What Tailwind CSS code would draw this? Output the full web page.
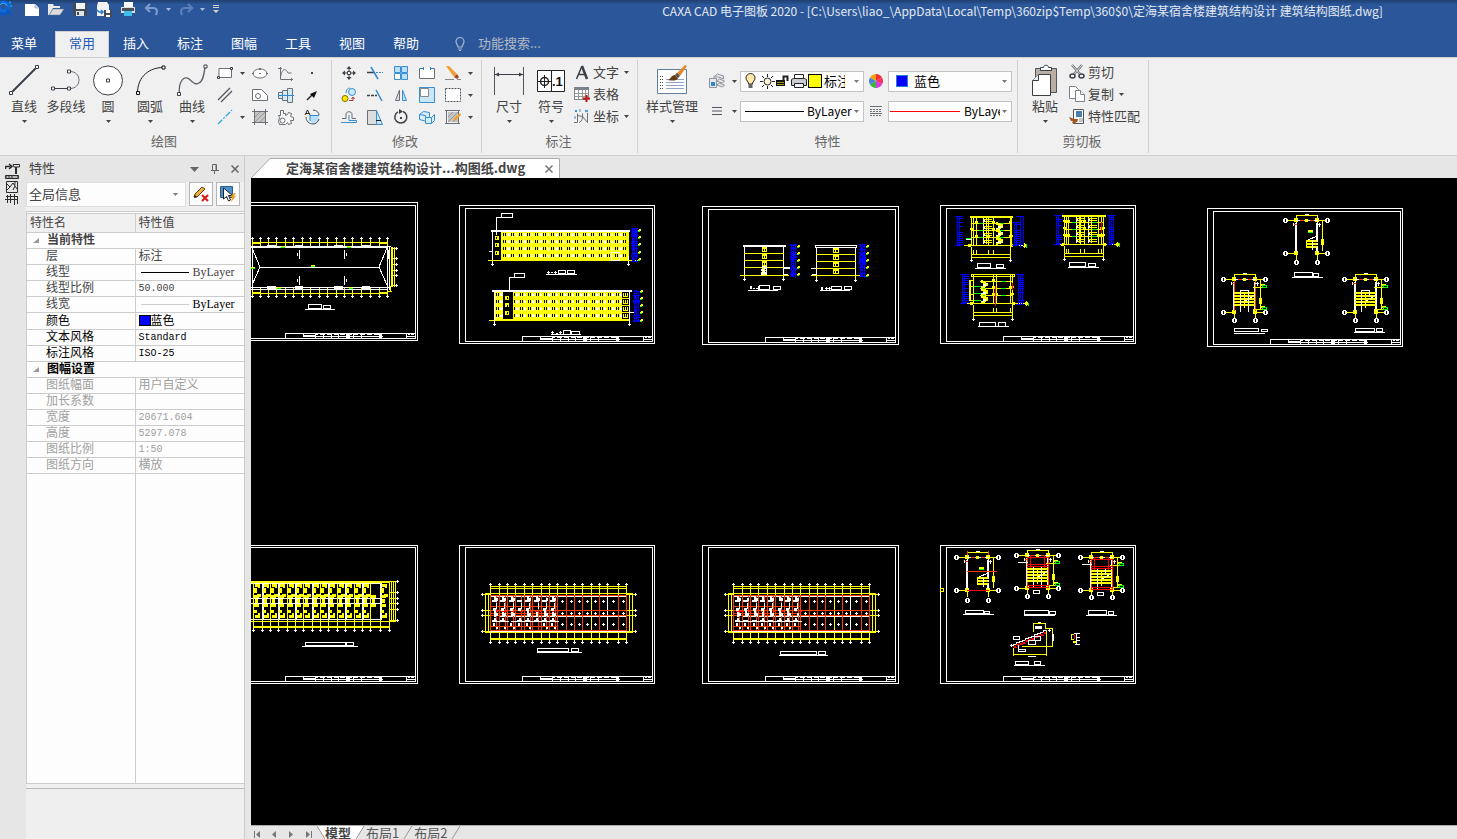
<!DOCTYPE html>
<html lang="zh-CN">
<head>
    <meta charset="UTF-8">
    <meta name="viewport" content="width=device-width, initial-scale=1.0">
    <title>CAXA CAD 电子图板 2020</title>
    <script src="https://cdn.jsdelivr.net/npm/@tailwindcss/browser@4"></script>
</head>
<body class="h-screen flex flex-col overflow-hidden bg-[#e6e6e6] font-['Noto_Sans_CJK_SC',sans-serif] text-[13px] leading-4 text-[#444444]">

    <!-- Shared icons -->
    <svg class="hidden">
        <symbol id="caret" viewBox="0 0 5 3"><path d="M0 0h5L2.5 3z" fill="currentColor"/></symbol>
    </svg>

    <header class="bg-[#2b579a] text-white">
        <!-- Quick access + title -->
        <div class="flex h-[31px] items-start bg-linear-to-b from-[#1f3f70] to-[#2b579a] to-15%">
            <svg class="mr-1 h-[18px] w-4" viewBox="0 0 16 18" fill="none"><path d="M0 3c3-2 7-1 8 2s-1 6-4 6-5-2-4-4" stroke="#0a6be0" stroke-width="3"/><path d="M0 5c2-3 6-2 7 1" stroke="#4ab4ff"/><path d="M0 14c3 1 7 0 8-3l3 4" stroke="#0b58c8" stroke-width="2.500"/><path d="M9 2l2 1M10 6h2" stroke="#1d8df2" stroke-width="2"/></svg>
            <button class="flex h-[18px] w-6 items-center justify-center" aria-label="新建"><svg class="h-4 w-4" viewBox="0 0 16 16"><path d="M1 3h10l4 4v8H1z" fill="#fff"/><path d="M11 3v4h4" fill="#cfd6e2" stroke="#8b98b0" stroke-width=".6"/></svg></button>
            <button class="flex h-[18px] w-6 items-center justify-center" aria-label="打开"><svg class="h-4 w-4" viewBox="0 0 16 16"><path d="M0 3h5l1 2h6v2H5l-4 7H0z" fill="#e9e9e9"/><path d="M5 8h11l-4 6H1z" fill="#dcdcdc" stroke="#62718e" stroke-width=".5"/></svg></button>
            <button class="flex h-[18px] w-6 items-center justify-center" aria-label="保存"><svg class="h-4 w-4" viewBox="0 0 16 16"><path d="M1 2h14v13H3l-2-2z" fill="#444b57"/><path d="M4 2h9v6H4z" fill="#f5f5f5"/><path d="M4 10h8v5H4z" fill="#dfe3ea"/><path d="M5 11h2v3H5z" fill="#444b57"/></svg></button>
            <button class="flex h-[18px] w-6 items-center justify-center" aria-label="另存为"><svg class="h-4 w-4" viewBox="0 0 16 16"><path d="M2 1h9l2 3v11H1V5z" fill="#f2f2f2"/><path d="M1 9l2 2h4M5 9l2 2-2 2" stroke="#2a7fd0" fill="none" stroke-width="1.5"/><path d="M8 9h8v7H8z" fill="#444b57"/><path d="M10 9h4v3h-4zM10 14h4v2h-4z" fill="#fff"/></svg></button>
            <button class="flex h-[18px] w-6 items-center justify-center" aria-label="打印"><svg class="h-4 w-4" viewBox="0 0 16 16"><path d="M4 1h9v5H4z" fill="#fff"/><path d="M1 6h14v6H1z" fill="#dedede"/><path d="M2 7h12v3H2z" fill="#4b4f57"/><path d="M4 10h8v5H4z" fill="#3fc0ea"/></svg></button>
            <button class="flex h-[18px] w-6 items-center justify-center text-[#7d9aca]" aria-label="撤销"><svg class="h-4 w-4" viewBox="0 0 16 16" fill="none" stroke="currentColor" stroke-width="2.2"><path d="M6 3L2 7l4 4M3 7h6c4 0 5 3 3 7"/></svg></button>
            <button class="flex h-[18px] w-2 items-center justify-center text-[#a9bcdc]" aria-label="撤销列表"><svg class="h-[3px] w-[5px]"><use href="#caret"/></svg></button>
            <button class="ml-[2px] flex h-[18px] w-6 items-center justify-center text-[#5b7fbb]" aria-label="重做"><svg class="h-4 w-4" viewBox="0 0 16 16" fill="none" stroke="currentColor" stroke-width="2.2"><path d="M10 3l4 4-4 4M13 7H7c-4 0-5 3-3 7"/></svg></button>
            <button class="flex h-[18px] w-2 items-center justify-center text-[#a9bcdc]" aria-label="重做列表"><svg class="h-[3px] w-[5px]"><use href="#caret"/></svg></button>
            <button class="ml-1 flex h-[18px] w-3 items-center justify-center" aria-label="自定义快速访问"><svg class="h-2 w-[6px]" viewBox="0 0 6 8" fill="#d5cfc5"><path d="M0 0h6v1H0zM0 2h6v1H0zM0 5h6L3 8z"/></svg></button>
            <h1 class="flex-1 pt-[3px] pl-[366px] text-center text-[12px] whitespace-nowrap text-[#e3e8f0]">CAXA CAD 电子图板 2020 - [C:\Users\liao_\AppData\Local\Temp\360zip$Temp\360$0\定海某宿舍楼建筑结构设计 建筑结构图纸.dwg]</h1>
        </div>
        <!-- Ribbon tabs -->
        <nav class="flex h-[26px] items-stretch">
            <button class="mr-[7px] w-12 pb-[3px]">菜单</button>
            <button class="w-[54px] border border-b-0 border-[#d0d0d0] bg-[#f0f0f0] pb-[3px] text-[#1e5bb5]">常用</button>
            <button class="w-[54px] pb-[3px]">插入</button>
            <button class="w-[54px] pb-[3px]">标注</button>
            <button class="w-[54px] pb-[3px]">图幅</button>
            <button class="w-[54px] pb-[3px]">工具</button>
            <button class="w-[54px] pb-[3px]">视图</button>
            <button class="w-[54px] pb-[3px]">帮助</button>
            <label class="ml-[21px] flex items-center gap-3 pb-[3px] text-[#b3c3dd]">
                <svg class="h-4 w-3" viewBox="0 0 12 16" fill="none" stroke="#a8b8d4" stroke-width="1.2"><path d="M4 12C4 10 2 9 2 6.500a4 4 0 0 1 8 0C10 9 8 10 8 12zM4 14h4M5 15.500h2"/></svg>
                <input type="text" placeholder="功能搜索..." class="w-32 outline-none placeholder:text-[#b3b9c4]">
            </label>
        </nav>
    </header>

    <!-- Ribbon -->
    <section class="flex h-[99px] border-t border-b border-[#cfcfcf] bg-[#f0f0f0] py-[2px]">
        <div class="flex flex-col border-r border-[#d2d2d2] pr-[6px] pl-[3px]">
            <div class="flex h-[71px] pt-[2px]">
                <button class="flex w-[42px] flex-col items-center whitespace-nowrap">
                    <svg class="h-[34px] w-8" viewBox="0 0 32 34"><path d="M2.500 31.500l27-27" stroke="#3b4048" stroke-width="2"/><path d="M1.500 29.500h3v3h-3zM27.500 3.500h3v3h-3z" fill="#fff" stroke="#3b4048"/></svg>
                    <span class="mt-[2px]">直线</span><svg class="mt-[6px] h-[3px] w-[5px]"><use href="#caret"/></svg>
                </button>
                <button class="flex w-[42px] flex-col items-center whitespace-nowrap">
                    <svg class="h-[34px] w-8" viewBox="0 0 32 34"><path d="M3 26.500h17c12 0 12-17 0-17" fill="none" stroke="#6b7078"/><path d="M3 26.500h16" stroke="#3b4048"/><path d="M1.500 25h3v3h-3zM17.500 25h3v3h-3zM17.500 8h3v3h-3z" fill="#fff" stroke="#3b4048"/></svg>
                    <span class="mt-[2px]">多段线</span>
                </button>
                <button class="flex w-[42px] flex-col items-center whitespace-nowrap">
                    <svg class="h-[34px] w-8" viewBox="0 0 32 34"><circle cx="16" cy="18.500" r="14.500" fill="#fff" stroke="#3b4048"/><path d="M14.500 17h3v3h-3z" fill="#fff" stroke="#3b4048"/></svg>
                    <span class="mt-[2px]">圆</span><svg class="mt-[6px] h-[3px] w-[5px]"><use href="#caret"/></svg>
                </button>
                <button class="flex w-[42px] flex-col items-center whitespace-nowrap">
                    <svg class="h-[34px] w-8" viewBox="0 0 32 34"><path d="M3.500 31C3.500 14 16 5.500 29 5.500" fill="none" stroke="#222"/><path d="M2.500 29.500h3v3h-3zM28 4h3v3h-3z" fill="#fff" stroke="#111"/></svg>
                    <span class="mt-[2px]">圆弧</span><svg class="mt-[6px] h-[3px] w-[5px]"><use href="#caret"/></svg>
                </button>
                <button class="flex w-[42px] flex-col items-center whitespace-nowrap">
                    <svg class="h-[34px] w-8" viewBox="0 0 32 34"><path d="M3.500 32C2 20 8 13 13 17s6 6 10 4 5-8 6-16" fill="none" stroke="#5a5f68" stroke-width="1.300"/><path d="M1.500 30.500h3v3h-3zM28 3h3v3h-3z" fill="#fff" stroke="#3b4048"/></svg>
                    <span class="mt-[2px]">曲线</span><svg class="mt-[6px] h-[3px] w-[5px]"><use href="#caret"/></svg>
                </button>
                <div class="grid grid-cols-[24px_10px_26px_26px_26px] grid-rows-[22px_22px_22px] place-items-center">
                    <button aria-label="矩形"><svg class="h-4 w-4" viewBox="0 0 16 16"><path d="M2 3.500h12.500v9H2z" fill="#fff" stroke="#6b7078"/><path d="M13.500 2.500h2v2h-2zM.5 11.500h2v2h-2z" fill="#fff" stroke="#3b4048"/></svg></button>
                    <button aria-label="矩形选项"><svg class="h-[3px] w-[5px]"><use href="#caret"/></svg></button>
                    <button aria-label="椭圆"><svg class="h-4 w-4" viewBox="0 0 16 16"><ellipse cx="8" cy="8.500" rx="7" ry="4.500" fill="#fff" stroke="#6b7078"/><path d="M7 8h2v1H7zM7 3h2v2H7zM0 8h2v1H0zM14 8h2v1h-2z" fill="#6b7078"/></svg></button>
                    <button aria-label="公式曲线"><svg class="h-4 w-4" viewBox="0 0 16 16" fill="none" stroke="#6b7078"><path d="M2.500 2v12.500H15M0 3.500h4M13.500 13v3M2.500 12C4 3 8 3 10 8h3.500"/></svg></button>
                    <button aria-label="点"><svg class="h-4 w-4" viewBox="0 0 16 16"><path d="M7 7h2v2H7z" fill="#444"/></svg></button>

                    <button aria-label="平行线"><svg class="h-4 w-4" viewBox="0 0 16 16" stroke="#50555e" stroke-width="1.300"><path d="M1 13L13 1M4 15L15 4"/></svg></button>
                    <span></span>
                    <button aria-label="孔轴"><svg class="h-4 w-4" viewBox="0 0 16 16" fill="#fff" stroke="#6b7078"><path d="M.500 2.500h9l6 6v5H.500z"/><circle cx="6" cy="9" r="2.500"/></svg></button>
                    <button aria-label="轴"><svg class="h-4 w-4" viewBox="0 0 16 16" fill="#d3ebf7" stroke="#6b7078"><path d="M.500 5.500h4v6h-4zM4.500 3.500h5v10h-5zM9.500 1.500h5v14h-5z"/><path d="M0 8.500h16" stroke="#2f87cf"/></svg></button>
                    <button aria-label="箭头"><svg class="h-4 w-4" viewBox="0 0 16 16"><path d="M3 13l5-5" stroke="#222" stroke-width="1.500"/><path d="M13 4l-3 7-4-4z" fill="#111"/></svg></button>

                    <button aria-label="中心线"><svg class="h-4 w-4" viewBox="0 0 16 16" stroke="#2ba3e0" stroke-width="1.200"><path d="M1 15L15 1" stroke-dasharray="6 1.500 2 1.500"/></svg></button>
                    <button aria-label="中心线选项"><svg class="h-[3px] w-[5px]"><use href="#caret"/></svg></button>
                    <button aria-label="剖面线"><svg class="h-4 w-4" viewBox="0 0 16 16"><path d="M3 3h10v10H3z" fill="#c4c4c4"/><path d="M3 8l5-5M3 13L13 3M8 13l5-5" stroke="#999"/><path d="M2.500 0v16M13.500 0v16M0 2.500h16M0 13.500h16" stroke="#6b7078"/></svg></button>
                    <button aria-label="齿轮"><svg class="h-4 w-4" viewBox="0 0 16 16" fill="#f7f7f7" stroke="#6b7078"><path d="M2.500 1.500h3v3h2v2l2-1 1-2 3 1-1 3 3 1v3h-3l1 3-3 1-1-2-2 2h-6l-1-3 1-4-1-2h2z"/><circle cx="4.500" cy="11.500" r="2.500"/></svg></button>
                    <button aria-label="局部放大"><svg class="h-4 w-4" viewBox="0 0 16 16" fill="none"><path d="M6 6h9v4c-1 3-3 5-5 5s-4-2-4-4z" fill="#b9e0f5"/><path d="M9 1c4 0 6 3 6 5M2 8c0 4 3 7 7 7 3 0 5-2 6-5" stroke="#50555e"/><path d="M6 6.500h9M6 6v6" stroke="#2f87cf"/><path d="M1 6l2.500-5L6 6M2 4.500h3" stroke="#222"/></svg></button>
                </div>
            </div>
            <p class="pt-[2px] text-center text-[#666666]">绘图</p>
        </div>

        <div class="flex flex-col border-r border-[#d2d2d2] pr-[7px] pl-1">
            <div class="flex h-[71px] pt-[2px]">
                <div class="grid grid-cols-[26px_26px_26px_26px_26px_8px] grid-rows-[22px_22px_22px] place-items-center">
                    <button aria-label="平移"><svg class="h-4 w-4" viewBox="0 0 16 16"><path d="M8 1l2.500 3h-5zM8 15l2.500-3h-5zM1 8l3-2.500v5zM15 8l-3-2.500v5z" fill="#3b4048"/><path d="M8 3v3M8 10v3M3 8h3M10 8h3" stroke="#3b4048"/><path d="M6.500 6.500h3v3h-3z" fill="#fff" stroke="#3b4048"/></svg></button>
                    <button aria-label="裁剪"><svg class="h-4 w-4" viewBox="0 0 16 16"><path d="M0 7.500h7" stroke="#3b4048" stroke-width="1.500"/><path d="M9 7.500h7" stroke="#2f87cf" stroke-dasharray="2 1"/><path d="M4 2l7 12" stroke="#2f87cf" stroke-width="1.500"/></svg></button>
                    <button aria-label="阵列"><svg class="h-4 w-4" viewBox="0 0 16 16" fill="#b9e0f5" stroke="#3a8fd0"><path d="M1.500 1.500h6v6h-6zM8.500 1.500h6v6h-6zM8.500 8.500h6v6h-6z"/><path d="M1.500 8.500h6v6h-6z" fill="#fff"/></svg></button>
                    <button aria-label="打断"><svg class="h-4 w-4" viewBox="0 0 16 16"><path d="M4 3.500H.500v10h15v-10H12" fill="#fff" stroke="#6b7078"/><path d="M2 3.500h3M11 3.500h3M4.500 2v3M11.500 2v3" stroke="#2f87cf"/></svg></button>
                    <button aria-label="删除"><svg class="h-4 w-4" viewBox="0 0 16 16"><path d="M1 1l3 0 8 8-3 3z" fill="#f0a030"/><path d="M9 12l3-3 2 3-2 2z" fill="#a04a28"/><path d="M0 14.500h9M12 14.500h4" stroke="#888"/></svg></button>
                    <button aria-label="删除选项"><svg class="h-[3px] w-[5px]"><use href="#caret"/></svg></button>

                    <button aria-label="复制图形"><svg class="h-4 w-4" viewBox="0 0 16 16"><circle cx="4" cy="11.500" r="3" fill="#ffe800" stroke="#7a7200"/><circle cx="11" cy="5" r="3.500" fill="#c9e9f9" stroke="#3a8fd0"/><path d="M5 6c0-3 2-5 4-5" stroke="#3a8fd0" fill="none"/><path d="M8 13.500h4V11M10.500 12L12 10l1.500 2" stroke="#a33" fill="none"/></svg></button>
                    <button aria-label="延伸"><svg class="h-4 w-4" viewBox="0 0 16 16"><path d="M0 8.500h10" stroke="#3b4048" stroke-width="1.500" stroke-dasharray="3 1"/><path d="M9 3l6 11" stroke="#2f87cf" stroke-width="1.500"/></svg></button>
                    <button aria-label="镜像"><svg class="h-4 w-4" viewBox="0 0 16 16"><path d="M6.500 3v10.500h-4z" fill="#ddd" stroke="#6b7078"/><path d="M9.500 3v10.500h4z" fill="#b9e0f5" stroke="#3a8fd0"/></svg></button>
                    <button aria-label="缩放"><svg class="h-4 w-4" viewBox="0 0 16 16"><path d="M.500.500h15v15H.500z" fill="#c9e7f7" stroke="#3a8fd0"/><path d="M1.500 1.500h8v8h-8z" fill="#fff" stroke="#888"/></svg></button>
                    <button aria-label="选择框"><svg class="h-4 w-4" viewBox="0 0 16 16"><path d="M.500 1.500h15v13H.500z" fill="#fff" stroke="#50555e" stroke-dasharray="2 1"/></svg></button>
                    <button aria-label="选择框选项"><svg class="h-[3px] w-[5px]"><use href="#caret"/></svg></button>

                    <button aria-label="等距线"><svg class="h-4 w-4" viewBox="0 0 16 16" fill="none"><path d="M1 9.500h4V5c0-3 6-3 6 0v4.500h4" stroke="#6b7078"/><path d="M0 13.500h15.500v-2H8V6" stroke="#3a8fd0"/></svg></button>
                    <button aria-label="拉伸"><svg class="h-4 w-4" viewBox="0 0 16 16"><path d="M.500 1.500h9v14h-9z" fill="#ddd" stroke="#6b7078"/><path d="M9.500 1.500l6 14h-6z" fill="#c9e7f7" stroke="#3a8fd0"/><path d="M9 11.500h5" stroke="#222"/></svg></button>
                    <button aria-label="旋转"><svg class="h-4 w-4" viewBox="0 0 16 16"><path d="M10 2.500A6 6 0 1 1 5 2.800" fill="none" stroke="#3b4048" stroke-width="1.500"/><path d="M6 0l4 2.500L6 5z" fill="#3b4048"/><path d="M7 8h2v2H7z" fill="#3b4048"/></svg></button>
                    <button aria-label="块"><svg class="h-4 w-4" viewBox="0 0 16 16" fill="#d6eefa" stroke="#3a8fd0"><path d="M.500 5.500l4-3 6 1v7l-3 2-7-2z"/><path d="M6.500 8.500h6l3-3v6l-3 3h-6zM12.500 8.500v6M.500 5.500l6 1v2"/></svg></button>
                    <button aria-label="块编辑"><svg class="h-4 w-4" viewBox="0 0 16 16"><path d="M3 3h10v10H3z" fill="#c4c4c4"/><path d="M3 8l5-5M3 13L13 3M8 13l5-5" stroke="#999"/><path d="M1.500 1v14M13.500 1v14M0 1.500h15M0 14.500h15" stroke="#6b7078"/><path d="M8 12l1-3 6-5 1 2-5 5z" fill="#f0a030"/></svg></button>
                    <button aria-label="块编辑选项"><svg class="h-[3px] w-[5px]"><use href="#caret"/></svg></button>
                </div>
            </div>
            <p class="pt-[2px] text-center text-[#666666]">修改</p>
        </div>

        <div class="flex flex-col border-r border-[#d2d2d2] pr-2 pl-[6px]">
            <div class="flex h-[71px] pt-[2px]">
                <button class="flex w-[42px] flex-col items-center whitespace-nowrap">
                    <svg class="h-[34px] w-8" viewBox="0 0 32 34"><path d="M1.500 5v28M30.500 5v28" stroke="#50555e"/><path d="M2 12.500h28" stroke="#3b4048"/><path d="M2 12.500l4-2v4zM30 12.500l-4-2v4z" fill="#3b4048"/></svg>
                    <span class="mt-[2px]">尺寸</span><svg class="mt-[6px] h-[3px] w-[5px]"><use href="#caret"/></svg>
                </button>
                <button class="flex w-[42px] flex-col items-center whitespace-nowrap">
                    <svg class="h-[34px] w-8" viewBox="0 0 32 34"><path d="M2.500 8.500h27v21h-27z" fill="#fff" stroke="#222"/><path d="M16.500 8v22M3 19.500h13M9.500 13v13" stroke="#222"/><circle cx="9.500" cy="19.500" r="4" fill="none" stroke="#222" stroke-width="1.500"/><text x="17" y="24" font-family="Liberation Sans" font-weight="bold" font-size="13" fill="#111">.1</text></svg>
                    <span class="mt-[2px]">符号</span><svg class="mt-[6px] h-[3px] w-[5px]"><use href="#caret"/></svg>
                </button>
                <div class="ml-[2px] flex flex-col whitespace-nowrap">
                    <button class="flex h-[22px] items-center gap-[3px] pb-[2px]"><svg class="h-4 w-4" viewBox="0 0 16 16" fill="none" stroke="#3b4048"><path d="M2.500 15L8 2M4 10.500h8" stroke-width="1.500"/><path d="M8 2l5 13" stroke-width="2.500"/></svg>文字<svg class="ml-[2px] h-[3px] w-[5px]"><use href="#caret"/></svg></button>
                    <button class="flex h-[22px] items-center gap-[3px] pb-[2px]"><svg class="h-4 w-4" viewBox="0 0 16 16"><path d="M.500 1.500h14v12H.500z" fill="#fff" stroke="#888"/><path d="M0 1h15v3H0z" fill="#7b828c"/><path d="M1 7.500h13M1 10.500h13M4.500 4v9M8.500 4v9M11.500 4v9" stroke="#999"/><path d="M12.500 9v7M9 12.500h7" stroke="#c01818" stroke-width="2"/></svg>表格</button>
                    <button class="flex h-[22px] items-center gap-[3px] pb-[2px]"><svg class="h-4 w-4" viewBox="0 0 16 16" fill="none"><path d="M3.500 5.500v9M3.500 7.500l5 1 5 6M5 14.500c3-1 4-4 3.500-9M13.500 5v9.500M0 14.500h3" stroke="#6b7078"/><path d="M1 2l2 2M3 2l-2 2M6 1v3M11 2l3 2M14 2l-3 2M1 8v3" stroke="#3a8fd0"/></svg>坐标<svg class="ml-[2px] h-[3px] w-[5px]"><use href="#caret"/></svg></button>
                </div>
            </div>
            <p class="pt-[2px] text-center text-[#666666]">标注</p>
        </div>

        <div class="flex flex-col border-r border-[#d2d2d2] pr-[5px] pl-[5px]">
            <div class="flex h-[71px] pt-[2px]">
                <button class="flex w-[58px] flex-col items-center whitespace-nowrap">
                    <svg class="h-[34px] w-8" viewBox="0 0 32 34"><path d="M1.500 7.500h29v24h-29z" fill="#fff" stroke="#5f7f9a"/><path d="M4 14.500h4M4 17.500h4M4 20.500h4M4 23.500h4M4 26.500h4" stroke="#444" stroke-dasharray="1 1"/><path d="M10 17.500h18M10 20.500h18M10 23.500h18M10 26.500h18" stroke="#8fa3c4"/><path d="M12 18c3-1 3-5 7-5l3 3c-1 3-6 3-10 2z" fill="#6b3d14"/><path d="M20 12l9-9 2 1-7 10z" fill="#e08a2a"/><path d="M19 13l2-2 3 3-2 2z" fill="#555"/></svg>
                    <span class="mt-[2px]">样式管理</span><svg class="mt-[6px] h-[3px] w-[5px]"><use href="#caret"/></svg>
                </button>
                <div class="ml-2 grid grid-cols-[16px_15px_124px_24px_124px] grid-rows-[20px_20px] content-start items-center gap-y-[10px] pt-[9px] text-black">
                    <button aria-label="图层"><svg class="h-4 w-4" viewBox="0 0 16 16" fill="#e8e8e8" stroke="#8d939c"><path d="M4.500 4l4-3 6 2v3l-5-2zM7.500 8l3-2 5 2-2 2zM7.500 12l3-2 5 2-2 2z"/><path d="M.500 5.500h7v9h-7z"/><path d="M2 9h4v4H2z" fill="#2f87cf" stroke="none"/></svg></button>
                    <button class="flex justify-center pl-1 text-[#444444]" aria-label="图层选项"><svg class="h-[3px] w-[5px]"><use href="#caret"/></svg></button>
                    <label class="flex h-[21px] items-center border border-[#c3c3c3] bg-[#fdfdfd] pl-1">
                        <svg class="h-4 w-[11px] shrink-0" viewBox="0 0 11 16"><path d="M3.500 11c0-3-2.500-3-2.500-6a4.500 4.500 0 0 1 9 0c0 3-2.500 3-2.500 6z" fill="#ffe9a8" stroke="#222"/><path d="M3.500 11h4v4h-4z" fill="#666"/></svg>
                        <svg class="ml-1 h-4 w-[15px] shrink-0" viewBox="0 0 15 16"><circle cx="7.500" cy="8.500" r="3.500" fill="#fff6d8" stroke="#222"/><path d="M7.500 1v3M7.500 13v3M0 8.500h3M12 8.500h3M2 3l2 2M11 12l2 2M13 3l-2 2M4 12l-2 2" stroke="#222"/></svg>
                        <svg class="ml-px h-4 w-[14px] shrink-0" viewBox="0 0 14 16"><path d="M0 7h9v6H0z" fill="#111"/><path d="M1 9.500h7M1 11.500h7" stroke="#9a9a10"/><path d="M7.500 8V3.500h4V8" fill="none" stroke="#222" stroke-width="2"/></svg>
                        <svg class="ml-px h-4 w-4 shrink-0" viewBox="0 0 16 16"><path d="M3.500 1.500h9v5h-9z" fill="#fff" stroke="#222"/><path d="M.500 6.500l2-1h11l2 1v6H.500z" fill="#c9ccd2" stroke="#222"/><path d="M3.500 10.500h9v4h-9z" fill="#e6f2f6" stroke="#222"/></svg>
                        <span class="ml-px h-[14px] w-[14px] shrink-0 border border-black bg-[#ffff00]"></span>
                        <select class="ml-[2px] w-[21px] flex-none appearance-none overflow-hidden" aria-label="当前图层"><option>标注</option></select>
                        <svg class="mr-1 ml-auto h-[3px] w-[5px] shrink-0 text-[#777777]"><use href="#caret"/></svg>
                    </label>
                    <button class="flex justify-center" aria-label="颜色"><svg class="h-4 w-4" viewBox="0 0 16 16"><path d="M8 8V1a7 7 0 0 1 6 3.500z" fill="#f03028"/><path d="M8 8l6-3.500a7 7 0 0 1 0 7z" fill="#f0306a"/><path d="M8 8l6 3.500A7 7 0 0 1 8 15z" fill="#d63ae0"/><path d="M8 8v7a7 7 0 0 1-6-3.500z" fill="#38b838"/><path d="M8 8l-6 3.500a7 7 0 0 1 0-7z" fill="#4a7fe0"/><path d="M8 8L2 4.500A7 7 0 0 1 8 1z" fill="#f0a010"/></svg></button>
                    <label class="flex h-[21px] items-center border border-[#c3c3c3] bg-[#fdfdfd] pl-[7px]">
                        <span class="h-3 w-3 shrink-0 border border-[#2b7bd0] bg-[#0000ff]"></span>
                        <select class="ml-[6px] flex-1 appearance-none" aria-label="当前颜色"><option>蓝色</option></select>
                        <svg class="mr-1 h-[3px] w-[5px] shrink-0 text-[#777777]"><use href="#caret"/></svg>
                    </label>

                    <button class="flex justify-center" aria-label="线型"><svg class="h-[10px] w-[10px]" viewBox="0 0 10 10" stroke="#50555e"><path d="M0 1.500h10M0 5h10M0 8.500h10"/></svg></button>
                    <button class="flex justify-center pl-1 text-[#444444]" aria-label="线型选项"><svg class="h-[3px] w-[5px]"><use href="#caret"/></svg></button>
                    <label class="flex h-[21px] items-center border border-[#c3c3c3] bg-[#fdfdfd] pl-1">
                        <span class="h-px w-[59px] shrink-0 bg-black"></span>
                        <select class="ml-[3px] w-[47px] flex-none appearance-none text-[12px]" aria-label="当前线型"><option>ByLayer</option></select>
                        <svg class="mr-1 ml-auto h-[3px] w-[5px] shrink-0 text-[#777777]"><use href="#caret"/></svg>
                    </label>
                    <button class="flex justify-center" aria-label="线宽"><svg class="h-[11px] w-3" viewBox="0 0 12 11" stroke="#6b7078"><path d="M0 .500h12M0 7.500h12"/><path d="M0 3.500h12M0 5.500h12M0 9.500h12" stroke-dasharray="2 1"/></svg></button>
                    <label class="flex h-[21px] items-center border border-[#c3c3c3] bg-[#fdfdfd] pl-px">
                        <span class="h-px w-[70px] shrink-0 bg-[#ff0000]"></span>
                        <select class="ml-1 w-9 flex-none appearance-none overflow-hidden text-[12px]" aria-label="当前线宽"><option>ByLayer</option></select>
                        <svg class="mr-1 ml-auto h-[3px] w-[5px] shrink-0 text-[#777777]"><use href="#caret"/></svg>
                    </label>
                </div>
            </div>
            <p class="pt-[2px] text-center text-[#666666]">特性</p>
        </div>

        <div class="flex flex-col border-r border-[#d2d2d2] pr-2 pl-[6px]">
            <div class="flex h-[71px] pt-[2px]">
                <button class="flex w-[42px] flex-col items-center whitespace-nowrap">
                    <svg class="h-[34px] w-8" viewBox="0 0 32 34"><path d="M6.500 6.500h21v24h-21z" fill="#b8aea4" stroke="#50555e"/><path d="M11.500 8.500v-3h3c0-3 5-3 5 0h3v3z" fill="#fff" stroke="#3b4048"/><path d="M3.500 18.500l6-6h12v21h-18z" fill="#fff" stroke="#3b4048"/><path d="M3.500 18.500h6v-6" fill="#eee" stroke="#3b4048"/></svg>
                    <span class="mt-[2px]">粘贴</span><svg class="mt-[6px] h-[3px] w-[5px]"><use href="#caret"/></svg>
                </button>
                <div class="ml-[3px] flex flex-col whitespace-nowrap">
                    <button class="flex h-[22px] items-center gap-[3px] pb-[2px]"><svg class="h-4 w-4" viewBox="0 0 16 16" fill="none"><path d="M3 1l8 9M13 1L5 10" stroke="#6b7078" stroke-width="2.500"/><path d="M3 1l8 9M13 1L5 10" stroke="#e0e0e0"/><ellipse cx="3.500" cy="12" rx="2.500" ry="2" stroke="#3b4048" stroke-width="1.500"/><ellipse cx="12.500" cy="12" rx="2.500" ry="2" stroke="#3b4048" stroke-width="1.500"/></svg>剪切</button>
                    <button class="flex h-[22px] items-center gap-[3px] pb-[2px]"><svg class="h-4 w-4" viewBox="0 0 16 16" fill="#fff" stroke="#7b828c"><path d="M.500.500h6l3 3v9h-9z"/><path d="M6.500 4.500h5l4 4v7h-9z"/><path d="M11.500 4.500v4h4"/></svg>复制<svg class="ml-[2px] h-[3px] w-[5px]"><use href="#caret"/></svg></button>
                    <button class="flex h-[22px] items-center gap-[3px] pb-[2px]"><svg class="h-4 w-4" viewBox="0 0 16 16"><path d="M4.500 1.500h10v14h-10z" fill="#fff" stroke="#50555e"/><path d="M7 3h6v6H7z" fill="#4a7fae"/><path d="M10 11h4M10 13h4" stroke="#888"/><path d="M0 9l5 2 4 0c0 3-3 5-6 4l1-2-2 0z" fill="#a5541c"/></svg>特性匹配</button>
                </div>
            </div>
            <p class="pt-[2px] text-center text-[#666666]">剪切板</p>
        </div>
    </section>

    <main class="flex min-h-0 flex-1">
        <!-- Docked toolbar handle -->
        <aside class="w-[26px] shrink-0 pt-[7px] pl-[5px]">
            <button aria-label="工具选项板"><svg class="h-[42px] w-4" viewBox="0 0 16 42" fill="none" stroke="#2c2c2c"><path d="M.500 6V3.500h5M4 1l3 2.500L4 6" stroke-width="1.500"/><path d="M8 1.500h6.500v2.500H9zM11.500 4v7M10.500 4v7" /><path d="M.500 12.500h13v3H.500z" fill="#777"/><path d="M2 14h1M5 14h1M8 14h4" stroke="#fff"/><path d="M1.500 18.500h11v11h-11zM2 21l3 3 3-4 4 6M2 27l3-3M8 27l2-4M10 18v4"/><path d="M1 33.500h12M0 36.500h13M2.500 32v8M5.500 31v9M9.500 31v11M12.500 33v8"/></svg></button>
        </aside>

        <!-- Property panel -->
        <section class="flex w-[219px] shrink-0 flex-col border-r border-[#cccccc] bg-[#f0f0f0]">
            <div class="flex h-[26px] items-center gap-3 bg-[#e6e6e6] pr-[5px] pl-[3px] text-[#666666]">
                <h2 class="mr-auto pb-[2px] text-[#444444]">特性</h2>
                <button aria-label="菜单"><svg class="h-[5px] w-[9px]" viewBox="0 0 9 5" fill="#666"><path d="M0 0h9L4.500 5z"/></svg></button>
                <button aria-label="固定"><svg class="h-[10px] w-2" viewBox="0 0 8 10" fill="none" stroke="#666"><path d="M1.500 6V.500h4V6M5 1v5M0 6.500h8M3.500 7v3"/></svg></button>
                <button aria-label="关闭"><svg class="h-2 w-2" viewBox="0 0 8 8" stroke="#666" stroke-width="1.500"><path d="M.500.500l7 7M7.500.500l-7 7"/></svg></button>
            </div>
            <div class="flex h-[29px] gap-[3px] pr-1">
                <label class="flex h-[25px] flex-1 items-center border border-[#dddddd] bg-[#fdfdfd] pr-[7px] pl-[2px]">
                    <select class="flex-1 appearance-none pb-[2px]" aria-label="选择对象"><option>全局信息</option></select>
                    <svg class="h-[3px] w-[5px] text-[#777777]"><use href="#caret"/></svg>
                </label>
                <button class="flex h-6 w-6 items-center justify-center border border-[#b5b5b5] bg-[#fdfdfd]" aria-label="清除"><svg class="h-4 w-4" viewBox="0 0 16 16"><path d="M1 11l1-3 7-7 3 2-8 8z" fill="#f0b040" stroke="#5a3a10"/><path d="M1 12l1-3 2 2z" fill="#222"/><path d="M9 9l6 6M15 9l-6 6" stroke="#e01818" stroke-width="2"/></svg></button>
                <button class="flex h-6 w-6 items-center justify-center border border-[#b5b5b5] bg-[#fdfdfd]" aria-label="快速选择"><svg class="h-4 w-4" viewBox="0 0 16 16"><path d="M.500.500h12v11H.500z" fill="#4d90cc" stroke="#2a5d8c"/><path d="M3.500 2v11l3-2.500 2 4.500 2-1-2-4.500h4z" fill="#fff" stroke="#222"/><path d="M14 7l-4 4h2l-1 5 5-6h-2l2-3z" fill="#f0a020"/></svg></button>
            </div>
            <div class="flex min-h-0 flex-1 flex-col border border-r-0 border-[#cccccc] bg-[#fdfdfd] pt-px">
                <table id="props" class="w-full table-fixed border-collapse font-['Liberation_Mono','Noto_Sans_CJK_SC',monospace] text-[12px] leading-[13px]">
                    <thead>
                        <tr class="h-[19px] bg-[#f0f0f0]">
                            <th class="w-[108px] border-y border-r border-[#cccccc] p-0 pt-[2px] pl-[3px] text-left font-normal">特性名</th>
                            <th class="border-y border-[#cccccc] p-0 pt-[2px] pl-[3px] text-left font-normal">特性值</th>
                        </tr>
                    </thead>
                    <tbody></tbody>
                </table>
                <div class="w-[109px] flex-1 border-r border-[#cccccc]"></div>
            </div>
            <div class="mt-1 h-[51px] shrink-0 border-t border-[#bbbbbb] bg-[#efefef]"></div>
        </section>

        <!-- Drawing area -->
        <section class="ml-[6px] flex min-w-0 flex-1 flex-col">
            <div class="flex h-[22px] items-end">
                <svg class="h-5 w-[19px]" viewBox="0 0 19 20"><path d="M0 20L19 .500V20z" fill="#fff"/><path d="M0 20L19 .500" stroke="#aaa"/></svg>
                <div class="flex h-5 items-center gap-5 rounded-tr-xs border-t border-r border-[#aaaaaa] bg-white pr-[6px] pl-4">
                    <span class="pb-[2px] font-bold whitespace-nowrap">定海某宿舍楼建筑结构设计...构图纸.dwg</span>
                    <button aria-label="关闭文档"><svg class="h-2 w-2" viewBox="0 0 8 8" stroke="#777" stroke-width="1.500"><path d="M.500.500l7 7M7.500.500l-7 7"/></svg></button>
                </div>
            </div>
            <div class="min-h-0 flex-1 overflow-hidden bg-black">
                <svg id="model" class="h-full w-full" shape-rendering="crispEdges"></svg>
            </div>
            <div class="flex h-[14px] items-start border-t border-[#aaaaaa] text-[#555555]">
                <div class="flex h-[13px] items-center gap-[10px] pt-[3px] pr-[5px] pl-[3px]">
                    <button class="flex" aria-label="第一个"><svg class="h-[7px] w-[7px]" viewBox="0 0 7 7" fill="#777"><path d="M0 0h1v7H0zM6 0v7L2 3.500z"/></svg></button>
                    <button class="flex" aria-label="上一个"><svg class="h-[7px] w-[7px]" viewBox="0 0 7 7" fill="#777"><path d="M5 0v7L1 3.500z"/></svg></button>
                    <button class="flex" aria-label="下一个"><svg class="h-[7px] w-[7px]" viewBox="0 0 7 7" fill="#777"><path d="M1 0v7l4-3.500z"/></svg></button>
                    <button class="flex" aria-label="最后一个"><svg class="h-[7px] w-[7px]" viewBox="0 0 7 7" fill="#777"><path d="M6 0h1v7H6zM1 0v7l4-3.500z"/></svg></button>
                </div>
                <svg class="h-[13px] w-2 shrink-0" viewBox="0 0 8 13"><path d="M0 0h8v13z" fill="#fff"/><path d="M0 0l8 13" stroke="#999"/></svg>
                <button class="h-[13px] bg-white text-[13px] leading-[13px] font-bold text-[#444444]">模型</button>
                <svg class="h-[13px] w-[15px] shrink-0" viewBox="0 0 15 13"><path d="M0 0h13L5 13H0z" fill="#fff"/><path d="M13 0L5 13" stroke="#999"/></svg>
                <button class="h-[13px] leading-[13px]">布局1</button>
                <svg class="h-[13px] w-[15px] shrink-0" viewBox="0 0 15 13"><path d="M13 0L5 13" stroke="#999"/></svg>
                <button class="h-[13px] leading-[13px]">布局2</button>
                <svg class="h-[13px] w-[15px] shrink-0" viewBox="0 0 15 13"><path d="M13 0L5 13" stroke="#999"/></svg>
            </div>
        </section>
    </main>

    <script>
        // ---- Property table ----
        const swatch = '<span class="inline-block h-[11px] w-3 border border-black bg-[#0000ff] align-[-1px]"></span>';
        const rows = [
            { group: '当前特性' },
            { name: '层', value: '标注' },
            { name: '线型', line: 'bg-black', value: 'ByLayer' },
            { name: '线型比例', value: '50.000', num: true },
            { name: '线宽', line: 'bg-[#cccccc]', value: 'ByLayer', dark: true },
            { name: '颜色', value: swatch + '蓝色', black: true },
            { name: '文本风格', value: 'Standard', num: true, black: true },
            { name: '标注风格', value: 'ISO-25', num: true, black: true },
            { group: '图幅设置', black: true },
            { name: '图纸幅面', value: '用户自定义', off: true },
            { name: '加长系数', value: '', off: true },
            { name: '宽度', value: '20671.604', num: true, off: true },
            { name: '高度', value: '5297.078', num: true, off: true },
            { name: '图纸比例', value: '1:50', num: true, off: true },
            { name: '图纸方向', value: '横放', off: true }
        ];

        document.querySelector('#props tbody').innerHTML = rows.map(row => {
            if (row.group) {
                return `<tr class="h-4 border-b border-[#cccccc]">
                    <td colspan="2" class="p-0 pt-[2px] pl-[6px] font-bold ${row.black ? 'text-black' : ''}">
                        <svg class="mr-2 inline-block h-[5px] w-[6px]" viewBox="0 0 6 5"><path d="M6 0v5H0z" fill="#999"/></svg>${row.group}</td></tr>`;
            }
            const tone = row.off ? 'text-[#a0a0a0]' : row.black ? 'text-black' : '';
            const value = row.line
                ? `<div class="flex items-center gap-1 pl-[2px] font-['Liberation_Serif'] ${row.dark ? 'text-black' : ''}"><span class="h-px w-12 ${row.line}"></span>${row.value}</div>`
                : `<span class="${row.num ? 'text-[10px]' : ''}">${row.value}</span>`;
            return `<tr class="h-4 border-b border-[#cccccc] whitespace-nowrap ${tone}">
                <td class="border-r border-[#cccccc] p-0 pt-[2px] pl-[19px]">${row.name}</td>
                <td class="p-0 pl-[3px] ${row.num || row.line ? '' : 'pt-[2px]'}">${value}</td></tr>`;
        }).join('');

        // ---- Model space ----
        // Coordinates are given in thirds of a pixel, relative to the view origin set with view().
        const W = '#fff', Y = '#ff0', B = '#00f', G = '#0f0', R = '#f00', O = '#ff3c00', K = '#000';
        const out = [];
        let ox = 0, oy = 0, seed = 7;

        const view = (x, y) => { ox = x - 251; oy = y - 178; };
        const px = v => Math.floor(v / 3);
        const rnd = () => (seed = (seed * 16807) % 2147483647) / 2147483647;
        const raw = (x, y, w, h, c) => out.push(`<rect x="${x}" y="${y}" width="${w}" height="${h}" fill="${c}"/>`);
        const fill = (x1, y1, x2, y2, c) => raw(ox + px(x1), oy + px(y1), Math.max(1, px(x2) - px(x1)), Math.max(1, px(y2) - px(y1)), c);
        const h = (x1, x2, y, c = W) => raw(ox + px(x1), oy + px(y), Math.max(1, px(x2) - px(x1) + 1), 1, c);
        const v = (x, y1, y2, c = W) => raw(ox + px(x), oy + px(y1), 1, Math.max(1, px(y2) - px(y1) + 1), c);
        const box = (x1, y1, x2, y2, c = W) => { h(x1, x2, y1, c); h(x1, x2, y2, c); v(x1, y1, y2, c); v(x2, y1, y2, c); };
        const plus = (x, y, c = W) => { h(x - 3, x + 3, y, c); v(x, y - 3, y + 3, c); };
        const seg = (x1, y1, x2, y2, c = W) => out.push(`<path d="M${ox + px(x1)} ${oy + px(y1)}L${ox + px(x2)} ${oy + px(y2)}" stroke="${c}" fill="none"/>`);
        const ring = (x, y) => {
            const cx = ox + px(x), cy = oy + px(y);
            raw(cx - 1, cy - 2, 3, 5, W); raw(cx - 2, cy - 1, 5, 3, W); raw(cx, cy - 1, 1, 3, K);
        };
        const title = (x1, x2, y, ...boxes) => { h(x1, x2, y); boxes.forEach(b => box(b[0], b[1], b[2], b[3])); };

        // Sheet border with its title block
        function sheet(x, y, inset, w = 585) {
            view(x, y);
            box(0, 0, w, 414);
            box(18, inset, 579, 408);
            h(189, 579, 393); v(189, 393, 408);
            h(243, 279, 399); h(243, 279, 402); v(243, 396, 402);
            fill(279, 393, 480, 399, W);
            for (let i = 0; i < 9; i++) fill(290 + i * 20, 396, 296 + i * 20, 399, K);
            for (const t of [279, 303, 327, 348, 372, 393, 417]) v(t, 393, 408);
            h(279, 480, 402);
            fill(372, 393, 384, 408, W); fill(471, 393, 480, 408, W);
            v(552, 393, 408); h(552, 579, 402); h(558, 562, 396); h(568, 574, 396);
        }

        const gridX = [7, 31, 55, 80, 105, 131, 156, 181, 208, 232, 258, 283, 308, 335, 360, 388, 412];

        function roofPlan() {
            view(250, 156);
            for (const x of gridX) {
                plus(x, 246); v(x, 249, 270, x === 208 ? W : Y);
                plus(x, 420); v(x, 398, 417, Y);
            }
            h(7, 412, 260, Y); h(7, 31, 263, Y); h(388, 412, 263, Y);
            h(7, 412, 411, Y); h(7, 31, 408, Y); h(388, 412, 408, Y);
            h(3, 420, 270); h(3, 412, 274); h(3, 420, 393); h(3, 412, 399);
            v(7, 274, 396); v(412, 270, 396); v(415, 282, 306); v(418, 270, 400);
            for (const x of [52, 135, 253, 336]) { fill(x, 267, x + 26, 276, W); fill(x, 391, x + 26, 400, W); }
            seg(8, 276, 32, 335); seg(32, 335, 8, 388); seg(412, 276, 388, 335); seg(388, 335, 412, 388);
            h(32, 388, 334);
            for (const x of [148, 283]) { v(x, 282, 308); v(x, 360, 384); v(x + (x < 200 ? -6 : 6), 291, 297); v(x + (x < 200 ? -6 : 6), 369, 375); }
            for (const p of [[93, 270], [293, 270], [183, 328], [82, 394], [298, 393], [3, 334]]) { h(p[0], p[0] + 9, p[1], Y); h(p[0], p[0] + 9, p[1] + 3, G); }
            for (const x of [423, 428, 433]) v(x, 274, 392, Y);
            h(412, 423, 405, Y); v(421, 390, 405, Y);
            for (const y of [277, 307, 325, 343, 358, 388]) { h(423, 436, y, Y); plus(439, y); }
            title(165, 254, 460, [175, 445, 214, 457], [219, 448, 242, 457]);
        }

        // Long facade: yellow wall with rows of windows
        function facade(x1, x2, y, bay) {
            fill(x1, y, x2, y + 86, Y);
            for (let r = 0; r < 4; r++) {
                for (let x = x1 + 6, i = 0; x < x2 - 9; x += 12, i++) {
                    const c = i % 4 === 0 || i % 4 === 2 ? K : W;
                    const top = y + 4 + r * 21;
                    v(x, top, top + 7, c);
                    if (i % 4 !== 3) v(x + 6, top, top + 7, i % 4 === 1 ? W : c);
                    if (c === W) v(x + 3, top + 4, top + 7, W);
                    if (rnd() < .5) h(x + 3, x + 3, top + 10, W);
                }
            }
            if (bay) {
                fill(bay[0], y, bay[1], y + 84, K);
                for (const t of [14, 36, 58]) { fill(bay[0] + 6, y + t, bay[0] + 20, y + t + 12, Y); v(bay[0] + 12, y + t + 4, y + t + 7, K); }
            }
        }

        // Stack of level dimensions with elevation marks
        function levels(x, y1, y2, mark) {
            fill(x, y1, x + 9, y2, B); v(x + 12, y1 + 3, y2, B);
            for (let y = y1; y < y2; y += 3) {
                if (rnd() < .5) h(x - 3, x + 15, y, B);
                if (rnd() < .3) h(x + 3, x + 3, y, K);
            }
            (mark || []).forEach(y => { h(x + 21, x + 26, y, Y); h(x + 18, x + 24, y + 3, Y); h(x + 18, x + 23, y + 6, G); });
        }

        function elevations() {
            view(250, 156);
            box(754, 172, 788, 184); h(740, 754, 184); v(740, 184, 223);
            facade(754, 1138, 227);
            h(723, 1139, 222); h(723, 1139, 225);
            for (const y of [240, 262, 286]) { fill(735, y, 747, y + 12, Y); v(740, y + 4, y + 6, K); }
            v(740, 228, 236); v(728, 223, 325); v(1136, 300, 325); h(715, 1165, 313, Y);
            plus(728, 325); plus(1136, 325); h(718, 728, 287); box(1084, 290, 1108, 312);
            levels(1146, 217, 317, [220, 242, 263, 285, 306]);
            title(890, 978, 355, [925, 343, 946, 352], [951, 343, 974, 352]);
            plus(895, 350); plus(916, 350); h(904, 906, 350);

            box(793, 352, 824, 364); h(779, 793, 364); v(779, 364, 402);
            facade(733, 1138, 407, [759, 789]);
            h(726, 1145, 402); h(726, 1145, 405);
            for (const y of [408, 430, 450, 472]) { box(1117, y, 1134, y + 15, K); v(1122, y + 6, y + 9, K); v(1128, y + 6, y + 9, K); }
            h(717, 1138, 493, Y); v(733, 405, 508); v(1138, 405, 508); plus(733, 506); plus(1138, 506); h(1138, 1150, 469);
            levels(1152, 402, 496, [403, 425, 445, 466, 490]);
            title(903, 990, 535, [940, 523, 961, 535], [965, 526, 989, 535]);
            plus(908, 530); plus(931, 530); h(918, 921, 531);
        }

        function endElevations() {
            view(690, 190);
            fill(160, 165, 288, 171, W); v(163, 170, 256); v(280, 170, 256);
            for (const y of [190, 211, 232]) h(163, 280, y, Y);
            h(150, 294, 256, Y);
            for (const y of [172, 193, 214]) { box(217, y, 230, y + 13, Y); h(217, 230, y + 3, Y); v(223, y, y + 13, Y); }
            fill(214, 228, 231, 256, W);
            for (let i = 0; i < 18; i++) raw(ox + 71 + Math.floor(rnd() * 6), oy + 76 + Math.floor(rnd() * 9), 1, 1, i % 3 ? Y : K);
            h(280, 297, 231); h(280, 297, 235); h(280, 292, 252);
            v(163, 258, 270, Y); v(280, 258, 270, Y); plus(163, 268); plus(281, 268);
            levels(303, 163, 261, [166, 187, 208, 229, 250]);
            title(175, 261, 301, [208, 286, 238, 299], [250, 289, 271, 299]);
            fill(180, 289, 186, 299, W); h(189, 194, 296); h(198, 208, 296); v(204, 289, 299);

            box(376, 166, 500, 172); v(379, 172, 256); v(496, 172, 256);
            for (const y of [193, 214, 235]) h(379, 496, y, Y);
            h(363, 507, 256, Y);
            for (const y of [175, 196, 217, 238]) { box(430, y, 446, y + 12, Y); h(430, 446, y + 3, Y); v(437, y, y + 12, Y); }
            h(363, 379, 235); h(366, 379, 253);
            v(379, 258, 272, Y); v(496, 258, 272, Y); plus(379, 271); plus(496, 271);
            levels(510, 163, 263, [166, 187, 208, 229, 253]);
            title(390, 477, 301, [424, 289, 454, 299], [463, 289, 485, 299]);
            fill(393, 292, 399, 300, W); plus(408, 296); plus(418, 296);
        }

        // Building section: columns, floors, window stacks
        function section(x1, x2, y, cols, shafts, stairs) {
            const base = y + 87;
            cols.forEach(x => v(x, y, base, Y));
            for (const t of [21, 42, 63]) {
                h(x1, x2, y + t, Y);
                for (const x of cols) if (rnd() < .6) fill(x - 3, y + t - 6, x + 6, y + t, Y);
                h(x1 + 24, x1 + 33, y + t, G); h(x2 - 33, x2 - 22, y + t, G);
            }
            shafts.forEach(x => {
                for (let r = 0; r < 4; r++) {
                    v(x, y + 4 + r * 21, y + 18 + r * 21); v(x + 3, y + 8 + r * 21, y + 12 + r * 21); h(x, x + 6, y + 16 + r * 21);
                    v(x + 9, y + 4 + r * 21, y + 18 + r * 21, Y); h(x, x + 24, y + 9 + r * 21, Y); h(x + 6, x + 24, y + 16 + r * 21, Y);
                }
            });
            if (stairs) {
                for (let r = 0; r < 3; r++) {
                    const t = y + 18 + r * 22;
                    for (let k = 0; k < 3; k++) { seg(stairs, t + k * 3, stairs + 21, t + 10 + k * 3, Y); seg(stairs + 21, t + 9 + k * 3, stairs, t + 20 + k * 3, k ? Y : W); }
                    fill(stairs + 6, t + 12, stairs + 15, t + 18, W);
                }
            }
            h(x1 - 22, x2 + 44, base, Y);
            fill(x1 - 9, base - 3, x1, base + 6, Y); fill(x2, base - 3, x2 + 9, base + 6, Y);
            fill(x2 + 39, base - 3, x2 + 48, base + 5, Y); fill(x2 + 42, base - 6, x2 + 45, base + 8, Y); v(x2 + 48, base - 2, base + 5, G);
            h(x1, x2, base + 27, Y); h(x1, x2, base + 36, Y);
            v(x1, base + 6, base + 45, Y); v(x2, base + 6, base + 45, Y);
            plus(x1, base + 46); plus(x2, base + 46);
            cols.slice(1, -1).forEach(x => v(x, base + 15, base + 27, Y));
        }

        function dimBlue(x, y1, y2, w = 18) {
            h(x - 6, x + w, y1, B); v(x, y1, y2, B); v(x + 6, y1, y2, B); h(x - 6, x + w - 6, y2, B);
            for (let y = y1 + 6; y < y2; y += 6) if (rnd() < .7) h(x, x + w, y, B);
        }

        function sections() {
            view(690, 190);
            section(845, 962, 79, [845, 850, 858, 896, 911, 962, 964], [880], 920);
            fill(841, 78, 969, 84, Y); h(828, 845, 147); h(830, 842, 144, G);
            dimBlue(803, 79, 166, 15); dimBlue(972, 97, 166, 18); v(991, 79, 172, B); v(1000, 79, 166, B); h(978, 1000, 79, B);
            title(855, 945, 235, [863, 220, 902, 233], [919, 223, 941, 233]);
            section(1123, 1240, 76, [1123, 1129, 1135, 1172, 1184, 1225, 1233, 1240], [1160, 1196], 0);
            fill(1117, 75, 1248, 81, Y); v(1234, 96, 126, R);
            dimBlue(1098, 76, 163, 15); dimBlue(1257, 76, 163, 10); v(1270, 76, 163, B); h(1257, 1275, 76, B);
            title(1134, 1224, 232, [1138, 217, 1187, 230], [1195, 220, 1217, 230]);
            section(850, 967, 254, [850, 911, 918, 962, 967], [], 873);
            fill(853, 262, 872, 337, K);
            for (const t of [275, 296, 317]) h(853, 872, t + 15, G);
            box(844, 253, 974, 260, Y); v(838, 271, 332, Y); v(841, 271, 332, Y); v(916, 290, 346, R); v(967, 280, 297, R);
            for (const y of [271, 290, 312, 331]) h(838, 850, y, Y);
            dimBlue(816, 253, 341); dimBlue(985, 253, 343, 15); v(997, 253, 343, B);
            title(864, 954, 409, [868, 397, 917, 408], [925, 397, 947, 408]);
        }

        // Stairwell plan; variant selects wall colour and stair layout
        function stairPlan(x, y, o = {}) {
            const w = 63, b = o.b || 99, wall = o.wall || W;
            h(x, x + w, y - 15, Y); v(x, y - 15, y, Y); v(x + w, y - 15, y, Y); h(x + 27, x + 35, y - 18);
            for (const t of [0, b]) {
                h(x - 27, x, y + t, Y); h(x + w, x + w + 24, y + t, Y);
                ring(x - 33, y + t); ring(x + w + 30, y + t);
                fill(x - 6, y + t - 6, x + 6, y + t + 6, Y); fill(x + w - 6, y + t - 6, x + w + 6, y + t + 6, Y);
            }
            h(x, x + w, y); h(x + 12, x + 20, y, O); h(x + 42, x + 52, y, O); fill(x + 26, y - 2, x + 36, y + 6, Y);
            v(x, y + 6, y + b - 6, wall); v(x - 3, y + 9, y + b - 8); v(x + w, y + 6, y + b - 6, wall); v(x + w - 3, y + 9, y + b - 8);
            v(x, y + b + 3, y + b + 18, Y); v(x + w, y + b + 3, y + b + 18, Y);
            ring(x, y + b + (o.d || 24)); ring(x + w, y + b + (o.d || 24));
            v(x + 78, y, y + b - 9, Y); box(x + 76, y + 57, x + 81, y + 72, Y);
            h(x - 9, x, y + 13, O); v(x - 9, y + 10, y + 16); h(x + w, x + w + 9, y + 12); v(x + w + 6, y + 9, y + 18);
            if (o.ground) {
                fill(x + 30, y + 60, x + w, y + 83, Y);
                h(x + 33, x + w, y + 66, K); h(x + 33, x + w, y + 75, K);
                seg(x + 36, y + 60, x + w, y + 48); v(x + 48, y + 60, y + 88);
                fill(x + 36, y + 30, x + 51, y + 36, Y); h(x + 36, x + 48, y + 36, G);
            } else {
                for (let k = 0; k < 5; k++) fill(x, y + 40 + k * 9, x + w, y + 46 + k * 9, Y);
                h(x + 18, x + 42, y + 33); v(x + 18, y + 33, y + 96); v(x + 42, y + 33, y + (o.short ? 50 : 96));
                v(x + 30, y + 42, y + 84, Y); seg(x + 33, y + 66, x + 63, y + 48);
                for (const t of [18, 84]) { h(x + 57, x + 93, y + t + 6, Y); fill(x + 78, y + t - 4, x + 92, y + t + 2, Y); box(x + 84, y + t + 1, x + 96, y + t + 6, G); }
            }
            if (o.red) {
                v(x + 9, y, y + 36, R); v(x + 51, y, y + 36, R); v(x + w, y + 6, y + b - 6, O);
                h(x, x + w, y + 6, R); h(x, x + w, y + 27, R); h(x, x + w, y + 33, R);
                h(x, x + w, y + 90, R); h(x, x + w, y + 96, R); box(x + 18, y + 105, x + 36, y + 114);
                h(x - 27, x, y + 20);
            }
        }

        // Slab reinforcement plan; s shifts it along the row of sheets
        function slabPlan(s) {
            view(250 + s, 535);
            const xs = [721, 748, 772, 797, 823, 847, 873, 898, 922, 949, 973, 997, 1024, 1048, 1072, 1105, 1129];
            h(721, 1129, 154, Y); h(721, 1129, 160, Y); h(706, 1147, 175, Y);
            h(706, 1147, 293, Y); h(721, 1129, 310, Y); h(721, 1129, 313, Y);
            for (const x of xs) { plus(x, 148); plus(x, 322); v(x, 151, 317, Y); }
            for (const x of [706, 714, 1138, 1147]) v(x, 175, 293, Y);
            for (const y of [177, 226, 241, 290]) {
                plus(697, y); plus(1156, y); h(700, 721, y, Y); h(1129, 1153, y, Y);
            }
            h(721, 1129, 184); h(721, 1105, 226); h(748, 1129, 244); h(721, 1129, 290);
            v(721, 177, 293); v(922, 181, 287); v(1072, 181, 287); v(1129, 181, 290);
            for (const y of [181, 226, 241, 287]) h(721, 1129, y, O);
            for (const y of [214, 235, 274]) h(721, 922, y, O);
            xs.slice(0, 9).forEach((x, i) => { v(x, 181, 287, O); if (i < 8) v(x + 17, 181, 287, O); });
            for (const x of [949, 973, 997, 1048, 1105, 1129]) v(x, 181, 287, O);
            // Bar callouts, denser in the left half
            for (let i = 0; i < 8; i++) {
                const x = 727 + i * 25;
                for (const [dx, y, w, t] of [[6, 184, 6, 15], [0, 196, 15, 6], [12, 190, 6, 9], [3, 220, 9, 9], [6, 229, 6, 18], [12, 235, 6, 9], [0, 256, 15, 5], [6, 250, 6, 12], [3, 265, 6, 9], [12, 276, 6, 6]]) {
                    if (rnd() < .85) fill(x + dx, y, x + dx + w, y + t, W);
                }
                v(x + 12, 205, 220); h(x + 6, x + 24, 259);
            }
            for (const x of [937, 964, 988, 1012, 1036, 1060, 1090, 1120]) for (const y of [199, 235, 268]) plus(x, y);
            for (let i = 0; i < 14; i++) { const x = 730 + rnd() * 200; h(x, x + 3, 230, R); }
        }

        function floorPlan() {
            view(250, 535);
            const xs = [10, 36, 61, 86, 111, 136, 161, 186, 211, 236, 262, 287, 312, 337, 362, 392, 418];
            h(3, 437, 139, Y); h(3, 437, 259, Y); h(10, 418, 273, Y); h(10, 418, 276, Y);
            h(3, 395, 145); h(3, 395, 190); h(3, 395, 205); h(3, 395, 253);
            h(3, 418, 142, Y);
            xs.forEach((x, i) => {
                v(x, 139, 286, Y); plus(x, 286);
                if (i % 2) fill(x, 147, x + 6, 252, W);
                if (i === 16) return;
                fill(x + 3, 181, x + 18, 190, Y); fill(x + 3, 208, x + 18, 217, Y); fill(x + 6, 192, x + 15, 204, Y);
                if (i === 14) return;
                fill(x + 6, 148, x + 21, 156, Y); fill(x + 3, 160, x + 12, 174, Y); fill(x + 15, 151, x + 21, 160, Y);
                fill(x + 3, 225, x + 12, 234, Y); fill(x + 6, 241, x + 21, 251, Y); fill(x + 15, 235, x + 21, 244, Y);
                fill(x + 12, 178, x + 24, 187, Y);
            });
            for (const x of [423, 430, 437]) v(x, 139, 259, Y);
            for (const y of [139, 172, 190, 205, 223, 256]) { h(418, 440, y, Y); plus(443, y); }
            title(156, 321, 334, [166, 322, 287, 331], [290, 322, 311, 331]);
        }

        function stairSheet() {
            view(690, 535);
            stairPlan(832, 67, { ground: true, d: 30 });
            h(832, 920, 109, O); h(832, 895, 166, R); v(832, 50, 58, O); v(895, 50, 58, O);
            title(819, 909, 238, [826, 226, 881, 236], [883, 229, 899, 236]);
            stairPlan(1012, 61, { red: true, wall: O });
            title(1002, 1092, 241, [1003, 226, 1076, 238], [1078, 229, 1097, 238]);
            stairPlan(1204, 67, { red: true, wall: O, short: true, d: 21 });
            title(1188, 1278, 241, [1195, 226, 1250, 238], [1254, 229, 1271, 238]);
            box(752, 160, 761, 169, Y);
            // Stair detail
            for (let i = 0; i < 11; i++) { const x = 970 + i * 9, y = 333 - i * 4; h(x, x + 9, y - 6); v(x, y - 6, y); h(x, x + 6, y, R); h(x + 3, x + 9, y + 3, R); }
            v(1031, 265, 290, Y); h(1031, 1067, 265, Y); v(1067, 265, 280, Y); fill(1035, 273, 1056, 284, W);
            h(1067, 1088, 280, Y); v(1088, 280, 334, Y); h(996, 1088, 334, Y); v(1070, 288, 360, Y); h(970, 1070, 358, Y); v(970, 340, 360, Y);
            box(970, 304, 988, 312); box(1033, 304, 1051, 316); box(1015, 316, 1036, 328); box(986, 342, 1006, 349); v(986, 330, 345);
            v(1088, 298, 316); v(1091, 298, 316); plus(963, 331); plus(1079, 287); h(1015, 1036, 363); h(1045, 1051, 262);
            title(972, 1062, 391, [976, 379, 1015, 388], [1034, 379, 1051, 388]);
            v(1159, 294, 328); h(1153, 1168, 295); h(1159, 1168, 307); h(1159, 1168, 316); h(1156, 1168, 327);
            v(1153, 300, 310, R); v(1144, 299, 313, Y); h(1144, 1150, 298, Y); h(1144, 1150, 313, Y); fill(1149, 318, 1159, 324, Y);
        }

        [[222, 202], [459, 205], [702, 206, 588], [940, 205], [1207, 208]].forEach(([x, y, w]) => sheet(x, y, 9, w));
        [[222, 545], [459, 545], [702, 545, 588], [940, 545]].forEach(([x, y, w]) => sheet(x, y, 6, w));

        roofPlan();
        elevations();
        endElevations();
        sections();

        view(1190, 196);
        stairPlan(319, 73, { ground: true, d: 27 });
        title(306, 396, 244, [313, 229, 368, 241], [370, 232, 386, 241]);
        stairPlan(133, 250, { wall: O });
        title(132, 222, 412, [133, 397, 206, 406], [214, 400, 233, 407]);
        stairPlan(496, 250, { short: true });
        title(492, 582, 409, [496, 397, 554, 406], [559, 397, 578, 406]);

        floorPlan();
        slabPlan(0);
        title(861, 993, 352, [862, 340, 956, 350], [964, 340, 986, 350]);
        slabPlan(243);
        view(690, 535);
        title(267, 411, 361, [271, 349, 380, 359], [385, 349, 407, 359]);
        stairSheet();

        document.getElementById('model').innerHTML = out.join('');
    </script>
</body>
</html>
